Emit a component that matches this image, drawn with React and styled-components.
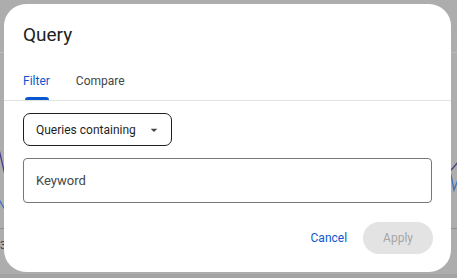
import React, { useState } from 'react';
import styled, { createGlobalStyle } from 'styled-components';

const GlobalStyle = createGlobalStyle`
  html, body {
    margin: 0;
    padding: 0;
    background: #adadad;
    font-family: Roboto, "Liberation Sans", sans-serif;
  }
  * { box-sizing: border-box; }
`;

const Screen = styled.div`
  position: relative;
  width: 100%;
  height: 278px;
  overflow: hidden;
  background: #adadad;
`;

/* the report page dimmed behind the dialog */
const Page = styled.div`
  display: flex;
  flex-direction: column;
  height: 100%;
`;

const PageHeader = styled.div`
  height: 53px;
  border-bottom: 1px solid #bcbcbc;
`;

const Chart = styled.div`
  height: 176px;
  border-bottom: 1px solid #8e8e8e;
  svg { display: block; }
`;

const AxisRow = styled.div`
  flex: 1;
  display: flex;
  align-items: flex-start;
  padding-top: 10px;
  font-size: 11px;
  color: #3a3a3a;
`;

const PageFooter = styled.div`
  height: 4px;
  background: #a3a3a3;
`;

/* overlay holding the modal */
const Overlay = styled.div`
  position: absolute;
  inset: 0;
  display: flex;
  align-items: flex-start;
  padding: 4px 0 0 4px;
`;

const Dialog = styled.div`
  width: 447px;
  background: #fff;
  border-radius: 22px;
  padding: 19px 0 18px;
  display: flex;
  flex-direction: column;
`;

const Title = styled.h2`
  margin: 0;
  padding: 0 19px;
  font-size: 19px;
  line-height: 24px;
  font-weight: 400;
  color: #1f1f1f;
`;

const TabList = styled.div`
  display: flex;
  gap: 26px;
  margin-top: 14px;
  padding: 0 19px;
  border-bottom: 1px solid #e1e3e1;
`;

const Tab = styled.button`
  position: relative;
  height: 39px;
  padding: 0;
  border: 0;
  background: none;
  font-family: inherit;
  font-size: 12px;
  font-weight: 400;
  color: ${p => (p.$active ? '#0b57d0' : '#444746')};
  cursor: pointer;

  &::after {
    content: '';
    display: ${p => (p.$active ? 'block' : 'none')};
    position: absolute;
    left: 2px;
    right: 1px;
    bottom: 0;
    height: 3px;
    border-radius: 3px 3px 0 0;
    background: #0b57d0;
  }
`;

const Body = styled.div`
  display: flex;
  flex-direction: column;
  align-items: flex-start;
  gap: 12px;
  padding: 12px 19px 0;
`;

const Select = styled.button`
  display: flex;
  align-items: center;
  height: 33px;
  padding: 0 9px 0 12px;
  border: 1px solid #1f1f1f;
  border-radius: 7px;
  background: #fff;
  font-family: inherit;
  font-size: 12px;
  color: #1f1f1f;
  cursor: pointer;

  svg {
    margin-left: 10px;
    display: block;
  }
`;

const Input = styled.input`
  width: 100%;
  height: 45px;
  padding: 0 12px;
  border: 1px solid #747775;
  border-radius: 4px;
  font-family: inherit;
  font-size: 13px;
  color: #1f1f1f;
  outline: none;

  &::placeholder {
    color: #444746;
  }
`;

const Actions = styled.div`
  display: flex;
  justify-content: flex-end;
  gap: 4px;
  margin-top: 19px;
  padding: 0 18px;
`;

const TextButton = styled.button`
  height: 32px;
  padding: 0 ${p => (p.$filled ? '20px' : '12px')};
  border: 0;
  border-radius: 16px;
  background: ${p => (p.$filled ? '#e3e3e3' : 'transparent')};
  font-family: inherit;
  font-size: 12px;
  font-weight: 400;
  color: ${p => (p.$filled ? '#a6a6a6' : '#0b57d0')};
  cursor: pointer;
`;

const ArrowDown = () => (
  <svg width="16" height="16" viewBox="0 0 24 24">
    <path d="M7 10l5 5 5-5z" fill="#444746" />
  </svg>
);

const App = () => {
  const [tab, setTab] = useState('filter');
  const [keyword, setKeyword] = useState('');

  return (
    <>
      <GlobalStyle />
      <Screen>
        <Page>
          <PageHeader />
          <Chart>
            <svg width="457" height="176" viewBox="0 0 457 176">
              <polyline
                points="-2,92 5,122 60,70 200,110 320,60 450,118 453,115 459,108"
                fill="none"
                stroke="#4b3a8e"
                strokeWidth="1.3"
              />
              <polyline
                points="-2,145 4,155 80,130 220,150 380,120 451,122 454,137 459,124"
                fill="none"
                stroke="#3f6ec0"
                strokeWidth="1.3"
              />
            </svg>
          </Chart>
          <AxisRow>
            <span>3</span>
          </AxisRow>
          <PageFooter />
        </Page>

        <Overlay>
          <Dialog>
            <Title>Query</Title>
            <TabList>
              <Tab $active={tab === 'filter'} onClick={() => setTab('filter')}>
                Filter
              </Tab>
              <Tab $active={tab === 'compare'} onClick={() => setTab('compare')}>
                Compare
              </Tab>
            </TabList>
            <Body>
              <Select>
                Queries containing
                <ArrowDown />
              </Select>
              <Input
                placeholder="Keyword"
                value={keyword}
                onChange={e => setKeyword(e.target.value)}
              />
            </Body>
            <Actions>
              <TextButton>Cancel</TextButton>
              <TextButton $filled disabled>
                Apply
              </TextButton>
            </Actions>
          </Dialog>
        </Overlay>
      </Screen>
    </>
  );
};

export default App;
